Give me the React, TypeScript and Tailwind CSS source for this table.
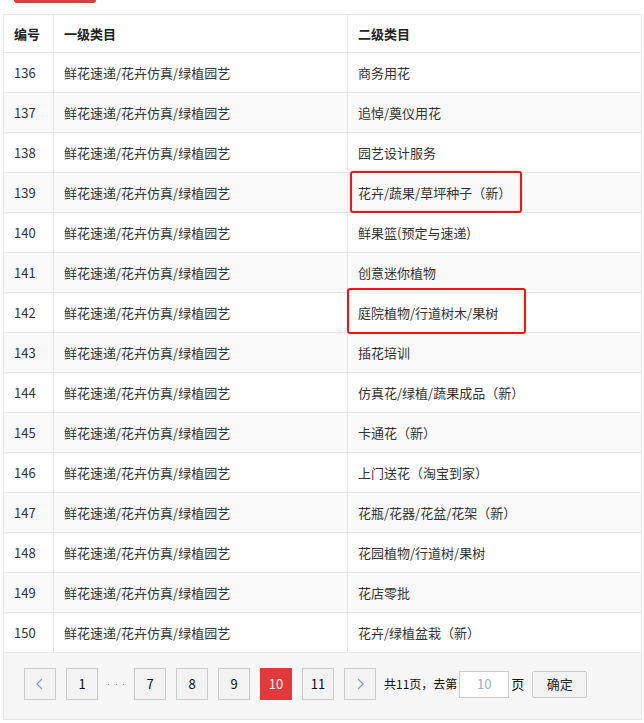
import React from "react";

const rows: [number, string][] = [
  [136, "商务用花"],
  [137, "追悼/奠仪用花"],
  [138, "园艺设计服务"],
  [139, "花卉/蔬果/草坪种子（新）"],
  [140, "鲜果篮(预定与速递)"],
  [141, "创意迷你植物"],
  [142, "庭院植物/行道树木/果树"],
  [143, "插花培训"],
  [144, "仿真花/绿植/蔬果成品（新）"],
  [145, "卡通花（新）"],
  [146, "上门送花（淘宝到家）"],
  [147, "花瓶/花器/花盆/花架（新）"],
  [148, "花园植物/行道树/果树"],
  [149, "花店零批"],
  [150, "花卉/绿植盆栽（新）"],
];

const font = { fontFamily: '"Noto Sans CJK SC", "Noto Sans", sans-serif' };

function PageBtn({ children, active }: { children: React.ReactNode; active?: boolean }) {
  return (
    <div
      className={
        active
          ? "w-[32px] h-[32px] flex items-center justify-center bg-[#e4393c] text-white text-[13px]"
          : "w-[32px] h-[32px] flex items-center justify-center border border-[#cccccc] bg-[#f3f3f3] text-[#111] text-[13px]"
      }
    >
      {children}
    </div>
  );
}

export default function App() {
  return (
    <div className="relative w-[644px] h-[723px] bg-white overflow-hidden text-[#333]" style={font}>
      <div className="ml-[14px] w-[82px] h-[3px] bg-[#e4393c] rounded-b-[3px]" />
      <div className="mt-[11px] ml-[3px] w-[639px] border-l border-r border-t border-[#e8e8e8]">
        <div className="grid grid-cols-[50px_294px_1fr] h-[38px] border-b border-[#e8e8e8] text-[13px] font-semibold text-[#222]">
          <div className="flex items-center pl-[10px] border-r border-[#e8e8e8]">编号</div>
          <div className="flex items-center pl-[10px] border-r border-[#e8e8e8]">一级类目</div>
          <div className="flex items-center pl-[10px]">二级类目</div>
        </div>
        {rows.map(([n, name], i) => (
          <div
            key={n}
            className={
              "grid grid-cols-[50px_294px_1fr] h-[40px] border-b border-[#e8e8e8] text-[13px] text-[#333] " +
              (i % 2 === 1 ? "bg-[#f9f9f9]" : "bg-white")
            }
          >
            <div className="flex items-center pl-[10px] border-r border-[#e8e8e8]">{n}</div>
            <div className="flex items-center pl-[10px] border-r border-[#e8e8e8]">鲜花速递/花卉仿真/绿植园艺</div>
            <div className="flex items-center pl-[10px]">{name}</div>
          </div>
        ))}
        <div className="h-[67px] bg-[#f7f7f7] border-b border-[#e5e5e5] flex items-start pt-[15px] pl-[20px]">
          <div className="flex items-center gap-[10px]">
            <PageBtn>
              <svg width="10" height="14" viewBox="0 0 10 14">
                <polyline points="7,2 2,7 7,12" fill="none" stroke="#8a9bb0" strokeWidth="1.2" />
              </svg>
            </PageBtn>
            <PageBtn>1</PageBtn>
            <div className="w-[16px] flex justify-between items-center">
              <span className="w-[1px] h-[1px] bg-[#999]" />
              <span className="w-[1px] h-[1px] bg-[#999]" />
              <span className="w-[1px] h-[1px] bg-[#999]" />
            </div>
            <PageBtn>7</PageBtn>
            <PageBtn>8</PageBtn>
            <PageBtn>9</PageBtn>
            <PageBtn active>10</PageBtn>
            <PageBtn>11</PageBtn>
            <PageBtn>
              <svg width="10" height="14" viewBox="0 0 10 14">
                <polyline points="3,2 8,7 3,12" fill="none" stroke="#8a9bb0" strokeWidth="1.2" />
              </svg>
            </PageBtn>
          </div>
          <div className="flex items-center h-[32px] ml-[8px] text-[12px] text-[#111]">
            <span>共11页，去第</span>
            <div className="ml-[2px] w-[50px] h-[27px] border border-[#ccc] bg-white flex items-center justify-center text-[#9db0c8] text-[13px]">
              10
            </div>
            <span className="ml-[2px] text-[13px]">页</span>
            <div className="ml-[8px] w-[55px] h-[27px] border border-[#ccc] rounded-[2px] bg-[#f3f3f3] flex items-center justify-center text-[13px] text-[#222]">
              确定
            </div>
          </div>
        </div>
      </div>
      <div className="absolute left-[350px] top-[171px] w-[172px] h-[42px] border-2 border-[#ff1010] rounded-[3px]" />
      <div className="absolute left-[347px] top-[288px] w-[179px] h-[46px] border-2 border-[#ff1010] rounded-[3px]" />
    </div>
  );
}
